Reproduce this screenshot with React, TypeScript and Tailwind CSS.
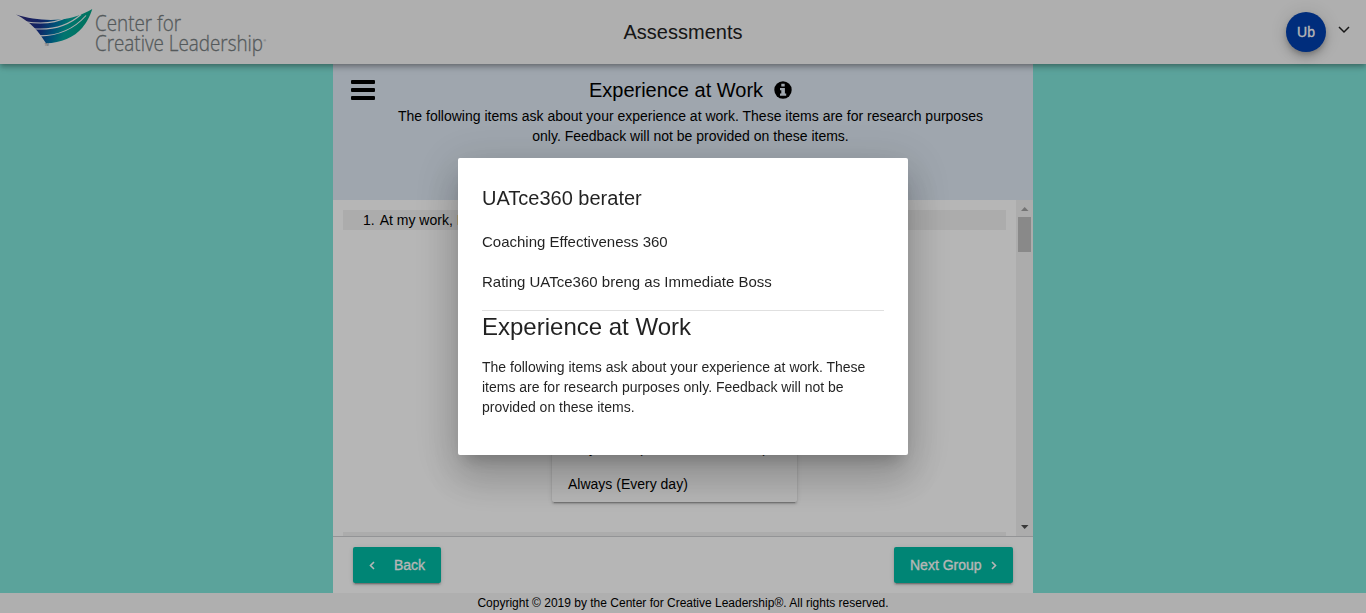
import React from 'react';

function Logo() {
  return (
    <svg width="280" height="64" viewBox="0 0 280 64" className="block shrink-0 overflow-visible">
      <defs>
        <linearGradient id="wing" gradientUnits="userSpaceOnUse" x1="20" y1="14" x2="84" y2="34">
          <stop offset="0.1" stopColor="#2a2d80" />
          <stop offset="0.35" stopColor="#17348f" />
          <stop offset="0.55" stopColor="#0072a8" />
          <stop offset="0.72" stopColor="#00a59d" />
          <stop offset="1" stopColor="#00a284" />
        </linearGradient>
      </defs>
      <path
        fill="url(#wing)"
        d="M16 14.500C29 18.500 45 21 60 19.500C72 18.500 83 14.500 92.300 9C89.500 17.500 86.500 22.500 82.500 27.500C74 37.500 61 43 46 43.300C42.500 38 38.500 32 34 27.500C29 22.500 23 18 16 14.500Z"
      />
      <path
        fill="none"
        stroke="#f5f5f5"
        strokeWidth="1.100"
        d="M25 21.800C40 24 55 23.500 66 17.500M31 28.500C49 30.500 67 27 81 14.500M37 35.800C56 36.500 73 30 86 15.500"
      />
      <g
        fill="#767d80"
        stroke="#767d80"
        strokeWidth="0.300"
        fontFamily="'Open Sans', sans-serif"
        fontWeight="300"
        fontSize="22"
      >
        <text x="95" y="31" textLength="86" lengthAdjust="spacingAndGlyphs">Center for</text>
        <text x="95" y="51" textLength="168" lengthAdjust="spacingAndGlyphs">Creative Leadership</text>
      </g>
      <g fill="#767d80" fontFamily="'Liberation Sans', sans-serif">
        <text x="263.500" y="41.500" fontSize="3.500">®</text>
        <text x="44.500" y="46" fontSize="3">TM</text>
      </g>
    </svg>
  );
}

function Header() {
  return (
    <header className="relative z-10 grid h-16 shrink-0 grid-cols-[1fr_auto_1fr] items-center bg-[#f5f5f5] shadow-[0_2px_4px_-1px_rgba(0,0,0,.2),0_4px_5px_0_rgba(0,0,0,.14),0_1px_10px_0_rgba(0,0,0,.12)]">
      <Logo />
      <h1 className="text-[20px] text-[#212121]">Assessments</h1>
      <div className="flex items-center justify-end gap-[12px] pr-4">
        <div className="flex size-10 items-center justify-center rounded-full bg-[#003fae] text-[14px] text-white shadow-[0_3px_5px_-1px_rgba(0,0,0,.2),0_6px_10px_0_rgba(0,0,0,.14),0_1px_18px_0_rgba(0,0,0,.12)] [-webkit-text-stroke:0.3px_#fff]">
          Ub
        </div>
        <svg width="12" height="8" viewBox="0 0 12 8" className="mb-1">
          <path d="M1 1L6 6L11 1" fill="none" stroke="#212121" strokeWidth="1.500" />
        </svg>
      </div>
    </header>
  );
}

function InfoIcon() {
  return (
    <svg width="18" height="18" viewBox="0 0 18 18">
      <circle cx="9" cy="9" r="8.700" fill="#000" />
      <path fill="#dfe9f4" d="M7.300 2.800h3.400v2.700H7.300zM6 7h4.900v5.500H12.200V14.800H6V12.500H7.300V9.200H6z" />
    </svg>
  );
}

function Scrollbar() {
  return (
    <div className="flex w-[17px] shrink-0 flex-col items-center justify-between bg-[#f1f1f1]">
      <div className="flex flex-col items-center">
        <svg width="17" height="17" viewBox="0 0 17 17">
          <path d="M5 11h7.500L8.700 7z" fill="#a3a3a3" />
        </svg>
        <div className="h-[35px] w-[13px] bg-[#c1c1c1]" />
      </div>
      <svg width="17" height="17" viewBox="0 0 17 17">
        <path d="M5 6h7.500L8.700 10z" fill="#505050" />
      </svg>
    </div>
  );
}

const buttonClass =
  'flex h-9 items-center rounded-[2px] bg-[#00bba4] text-[14px] text-white [-webkit-text-stroke:0.3px_#fff] shadow-[0_3px_1px_-2px_rgba(0,0,0,.2),0_2px_2px_0_rgba(0,0,0,.14),0_1px_5px_0_rgba(0,0,0,.12)]';

function Survey() {
  return (
    <main className="mx-auto flex min-h-0 w-[700px] flex-1 flex-col bg-white">
      <section className="flex h-[136px] shrink-0 bg-[#dfe9f4]">
        <button className="ml-[18px] mt-4 flex h-5 w-6 flex-col justify-between">
          <span className="h-1 w-6 rounded-[1px] bg-black" />
          <span className="h-1 w-6 rounded-[1px] bg-black" />
          <span className="h-1 w-6 rounded-[1px] bg-black" />
        </button>
        <div className="ml-[18px] w-[595px] text-center">
          <h2 className="mt-[14px] flex items-center justify-center gap-[11px] text-[20px] leading-6">
            Experience at Work <InfoIcon />
          </h2>
          <p className="mt-1 text-[14px] leading-5">
            The following items ask about your experience at work. These items are for research purposes only.
            Feedback will not be provided on these items.
          </p>
        </div>
      </section>
      <section className="flex min-h-0 flex-1">
        <div className="flex min-w-0 flex-1 flex-col overflow-hidden px-[10px] pt-[10px]">
          <div className="flex h-5 shrink-0 gap-[5px] bg-[#f1f1f1] pl-5 text-[14px] leading-5">
            <span>1.</span>
            <span>At my work, I feel bursting with energy.</span>
          </div>
          <ul className="mx-auto mt-[202px] flex w-[245px] shrink-0 flex-col rounded-[2px] px-4 text-[14px] shadow-[0_3px_1px_-2px_rgba(0,0,0,.2),0_2px_2px_0_rgba(0,0,0,.14),0_1px_5px_0_rgba(0,0,0,.12)]">
            <li className="h-[34px] whitespace-nowrap leading-[32px]">Very Often (A few times a week)</li>
            <li className="h-9 leading-9">Always (Every day)</li>
          </ul>
          <div className="mt-[30px] h-5 shrink-0 bg-[#f1f1f1]" />
        </div>
        <Scrollbar />
      </section>
      <section className="flex h-[57px] shrink-0 items-start justify-between border-t border-[#cfd0d2] px-5 pt-[10px]">
        <button className={buttonClass + ' w-[88px] gap-[18px] pl-4'}>
          <svg width="7" height="9" viewBox="0 0 7 9">
            <path d="M5 1L1.500 4.500L5 8" fill="none" stroke="#fff" strokeWidth="1.600" />
          </svg>
          Back
        </button>
        <button className={buttonClass + ' w-[119px] gap-2 pl-4'}>
          Next Group
          <svg width="7" height="9" viewBox="0 0 7 9">
            <path d="M2 1L5.500 4.500L2 8" fill="none" stroke="#fff" strokeWidth="1.600" />
          </svg>
        </button>
      </section>
    </main>
  );
}

function Dialog() {
  return (
    <div className="fixed inset-0 z-20 flex items-center justify-center bg-black/[0.288]">
      <div className="h-[297px] w-[450px] rounded-[2px] bg-white px-6 pt-6 text-black/[0.87] shadow-[0_11px_15px_-7px_rgba(0,0,0,.2),0_24px_38px_3px_rgba(0,0,0,.14),0_9px_46px_8px_rgba(0,0,0,.12)]">
        <h2 className="text-[20px] leading-8">UATce360 berater</h2>
        <p className="mt-[18px] text-[15px] leading-5">Coaching Effectiveness 360</p>
        <p className="mt-5 text-[15px] leading-5">Rating UATce360 breng as Immediate Boss</p>
        <hr className="mt-[18px] w-[402px] border-t border-black/[0.12]" />
        <h3 className="text-[24px] leading-8">Experience at Work</h3>
        <p className="mt-[14px] text-[14px] leading-5">
          The following items ask about your experience at work. These items are for research purposes only. Feedback
          will not be provided on these items.
        </p>
      </div>
    </div>
  );
}

export default function App() {
  return (
    <div className="flex h-screen flex-col overflow-hidden bg-[#80e5da] font-['Liberation_Sans',Arial,sans-serif] text-black">
      <Header />
      <Survey />
      <footer className="h-5 shrink-0 bg-[#f5f5f5] text-center text-[12px] leading-5">
        Copyright © 2019 by the Center for Creative Leadership®. All rights reserved.
      </footer>
      <Dialog />
    </div>
  );
}
